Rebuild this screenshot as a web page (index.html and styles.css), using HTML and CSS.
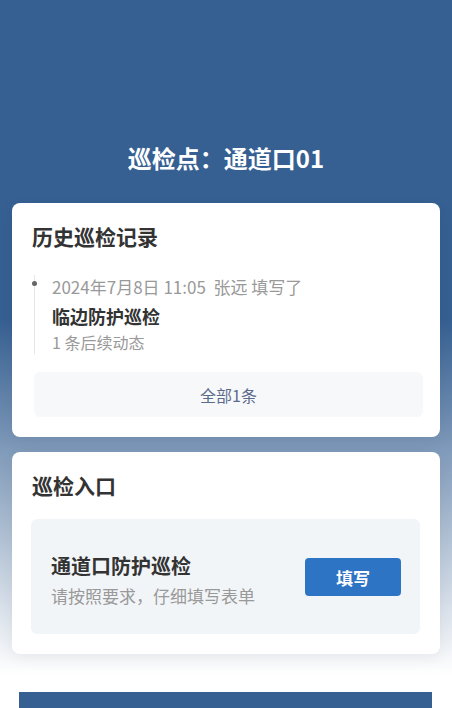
FILE: index.html
```html
<!DOCTYPE html>
<html lang="zh-CN">
<head>
<meta charset="utf-8">
<title>巡检点</title>
<link rel="stylesheet" href="styles.css">
</head>
<body>
<div class="page">
  <header class="header">
    <h1 class="page-title">巡检点：通道口01</h1>
  </header>

  <section class="card">
    <h2 class="card-title">历史巡检记录</h2>
    <div class="timeline">
      <div class="tl-item">
        <span class="tl-dot"></span>
        <div class="tl-meta">2024年7月8日 11:05&nbsp; 张远 填写了</div>
        <div class="tl-name">临边防护巡检</div>
        <div class="tl-sub">1 条后续动态</div>
      </div>
    </div>
    <div class="all-btn">全部1条</div>
  </section>

  <section class="card card-entry">
    <h2 class="card-title">巡检入口</h2>
    <div class="entry">
      <div class="entry-text">
        <div class="entry-name">通道口防护巡检</div>
        <div class="entry-sub">请按照要求，仔细填写表单</div>
      </div>
      <div class="fill-btn">填写</div>
    </div>
  </section>

  <div class="bottom-bar"></div>
</div>
</body>
</html>
```

FILE: styles.css
```css
* { box-sizing: border-box; }
html, body {
  margin: 0;
  padding: 0;
}
body {
  font-family: "Noto Sans CJK SC", "Noto Sans", sans-serif;
  color: #333;
  background: #fff;
}
.page {
  width: 452px;
  min-height: 708px;
  overflow: hidden;
  background: linear-gradient(to bottom, #366092 0, #366092 320px, #ffffff 675px, #ffffff 100%);
}
.header {
  padding-top: 142px;
}
.page-title {
  margin: 0;
  text-align: center;
  color: #fff;
  font-size: 24px;
  line-height: 32px;
  font-weight: 700;
}
.card {
  margin: 29px 12px 0;
  padding: 20px;
  background: #fff;
  border-radius: 8px;
  box-shadow: 0 4px 16px rgba(0, 0, 0, 0.06);
}
.card-entry {
  margin-top: 15px;
}
.card-title {
  margin: 0;
  font-size: 21px;
  line-height: 27px;
  font-weight: 700;
  color: #333;
}
.timeline {
  margin-top: 25px;
  padding-left: 2px;
}
.tl-item {
  position: relative;
  padding-left: 17px;
  border-left: 1px solid #e6e6e6;
}
.tl-dot {
  position: absolute;
  left: -3px;
  top: 6px;
  width: 5px;
  height: 5px;
  border-radius: 50%;
  background: #666;
}
.tl-meta {
  font-size: 17px;
  line-height: 24px;
  color: #999;
}
.tl-name {
  margin-top: 3px;
  font-size: 18px;
  line-height: 28px;
  font-weight: 700;
  color: #333;
}
.tl-sub {
  font-size: 16px;
  line-height: 24px;
  color: #999;
}
.all-btn {
  margin: 18px -3px 0 2px;
  height: 45px;
  display: flex;
  align-items: center;
  justify-content: center;
  background: #f7f8fa;
  border-radius: 6px;
  font-size: 16px;
  color: #5c6b8a;
}
.entry {
  margin: 20px 0 0 -1px;
  height: 115px;
  padding: 33px 19px 0 20px;
  display: flex;
  justify-content: space-between;
  align-items: flex-start;
  background: #f2f5f8;
  border-radius: 6px;
}
.entry-name {
  font-size: 20px;
  line-height: 28px;
  font-weight: 700;
  color: #333;
}
.entry-sub {
  margin-top: 4px;
  font-size: 17px;
  line-height: 24px;
  color: #999;
}
.fill-btn {
  margin-top: 6px;
  width: 96px;
  height: 38px;
  display: flex;
  align-items: center;
  justify-content: center;
  background: #2e74c4;
  border-radius: 4px;
  color: #fff;
  font-size: 17px;
  font-weight: 700;
}
.bottom-bar {
  margin: 38px 20px 0 19px;
  height: 40px;
  background: #366092;
}
```
